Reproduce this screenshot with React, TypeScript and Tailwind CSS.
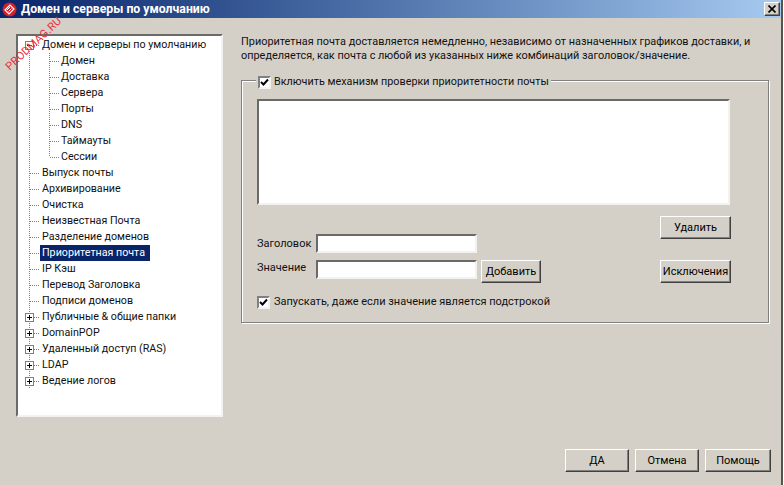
const raised = "bg-[#d4d0c8] border border-t-white border-l-white border-r-[#404040] border-b-[#404040] shadow-[inset_-1px_-1px_0_#808080]";
const sunken = "bg-white border-2 border-t-[#6a6a66] border-l-[#6a6a66] border-r-[#f4f2ee] border-b-[#f4f2ee]";

function Btn({ children, cls }: { children: string; cls: string }) {
  return <div className={`${raised} flex h-[23px] shrink-0 items-center justify-center text-black ${cls}`}>{children}</div>;
}

function Check() {
  return (
    <div className={`flex h-[13px] w-[13px] shrink-0 items-center justify-center ${sunken} border-t-[#808080] border-l-[#808080]`}>
      <svg width="9" height="9" viewBox="0 0 9 9">
        <path d="M1 4 L3.5 6.5 L8 1.5" fill="none" stroke="#000" strokeWidth="2" />
      </svg>
    </div>
  );
}

type Kind = "root" | "child" | "childLast" | "leaf" | "plus";

function Connector({ kind }: { kind: Kind }) {
  const d = { stroke: "#808080", strokeDasharray: "1 1", strokeWidth: 1 };
  const isChild = kind === "child" || kind === "childLast";
  const hasBox = kind === "root" || kind === "plus";
  return (
    <svg width={isChild ? 35 : 16} height="16" viewBox={`0 0 ${isChild ? 35 : 16} 16`} className="shrink-0">
      <line x1="5.5" y1={kind === "root" ? 8 : 0} x2="5.5" y2="16" {...d} />
      {!isChild && <line x1="6" y1="8.5" x2="16" y2="8.5" {...d} />}
      {isChild && <line x1="25.5" y1="0" x2="25.5" y2={kind === "childLast" ? 8 : 16} {...d} />}
      {isChild && <line x1="26" y1="8.5" x2="35" y2="8.5" {...d} />}
      {hasBox && (
        <g>
          <rect x="1.5" y="4.5" width="8" height="8" fill="#fff" stroke="#808080" />
          <line x1="3" y1="8.5" x2="8" y2="8.5" stroke="#000" />
          {kind === "plus" && <line x1="5.5" y1="6" x2="5.5" y2="11" stroke="#000" />}
        </g>
      )}
    </svg>
  );
}

const rows: { t: string; k: Kind; sel?: boolean }[] = [
  { t: "Домен и серверы по умолчанию", k: "root" },
  { t: "Домен", k: "child" },
  { t: "Доставка", k: "child" },
  { t: "Сервера", k: "child" },
  { t: "Порты", k: "child" },
  { t: "DNS", k: "child" },
  { t: "Таймауты", k: "child" },
  { t: "Сессии", k: "childLast" },
  { t: "Выпуск почты", k: "leaf" },
  { t: "Архивирование", k: "leaf" },
  { t: "Очистка", k: "leaf" },
  { t: "Неизвестная Почта", k: "leaf" },
  { t: "Разделение доменов", k: "leaf" },
  { t: "Приоритетная почта", k: "leaf", sel: true },
  { t: "IP Кэш", k: "leaf" },
  { t: "Перевод Заголовка", k: "leaf" },
  { t: "Подписи доменов", k: "leaf" },
  { t: "Публичные & общие папки", k: "plus" },
  { t: "DomainPOP", k: "plus" },
  { t: "Удаленный доступ (RAS)", k: "plus" },
  { t: "LDAP", k: "plus" },
  { t: "Ведение логов", k: "plus" },
];

export default function App() {
  return (
    <div className="relative flex h-[485px] w-[783px] flex-col overflow-hidden border-r-2 border-r-[#555550] bg-[#d4d0c8] text-[11px] leading-4 text-[#111] [font-family:'Roboto','Liberation_Sans',sans-serif]">
      <div className="flex h-[18px] shrink-0 items-center bg-gradient-to-r from-[#0a246a] to-[#a6caf0] pl-[2px] pr-[1px]">
        <svg width="15" height="15" viewBox="0 0 15 15" className="shrink-0">
          <circle cx="7.5" cy="7.5" r="7" fill="#d81e24" />
          <path d="M3 8 L8 3 L12 7 L7 12 Z" fill="none" stroke="#fff" strokeWidth="1.2" />
          <path d="M5 8 L8 5 M6.5 9.5 L9.5 6.5" stroke="#fff" strokeWidth="1" />
        </svg>
        <span className="ml-[4px] text-[12.25px] font-bold text-white">Домен и серверы по умолчанию</span>
        <div className={`${raised} ml-auto flex h-[14px] w-[16px] items-center justify-center`}>
          <svg width="8" height="8" viewBox="0 0 8 8">
            <path d="M0.5 0.5 L7.5 7.5 M7.5 0.5 L0.5 7.5" stroke="#000" strokeWidth="1.6" />
          </svg>
        </div>
      </div>

      <div className="flex flex-1 pl-[16px] pt-[16px]">
        <div className={`${sunken} h-[383px] w-[207px] shrink-0 pl-[6px] pt-[1px] text-[10.7px]`}>
          {rows.map((r) => (
            <div key={r.t} className="flex h-4 items-center whitespace-nowrap">
              <Connector kind={r.k} />
              <span className={`pl-[2px] ${r.sel ? "bg-[#0a246a] pr-[5px] text-white" : ""}`}>{r.t}</span>
            </div>
          ))}
        </div>

        <div className="ml-[18px] flex w-[530px] flex-col">
          <p className="mt-[1px] w-[530px] text-[10.9px] leading-[14px]">
            Приоритетная почта доставляется немедленно, независимо от назначенных графиков доставки, и определяется, как почта с любой из указанных ниже комбинаций заголовок/значение.
          </p>
          <div className="relative mt-[17px] flex h-[243px] w-[528px] flex-col border border-[#808080] pl-[15px] pt-[18px] shadow-[inset_1px_1px_0_#fff,1px_1px_0_#fff]">
            <div className="absolute left-[14px] top-[-7px] flex items-center gap-[2px] bg-[#d4d0c8] px-[2px] text-[10.8px]">
              <Check />
              <span className="pl-[1px]">Включить механизм проверки приоритетности почты</span>
            </div>
            <div className={`${sunken} h-[106px] w-[473px] shrink-0`} />
            <div className="flex flex-1">
              <div className="flex w-[403px] shrink-0 flex-col pt-[29px]">
                <div className="flex items-center">
                  <span className="w-[59px]">Заголовок</span>
                  <div className={`${sunken} h-[19px] w-[161px]`} />
                </div>
                <div className="mt-[7px] flex items-start">
                  <span className="w-[59px]">Значение</span>
                  <div className={`${sunken} h-[19px] w-[161px]`} />
                  <Btn cls="ml-[4px] w-[60px]">Добавить</Btn>
                </div>
                <div className="mt-[11px] flex items-center gap-[4px]">
                  <Check />
                  <span className="whitespace-nowrap">Запускать, даже если значение является подстрокой</span>
                </div>
              </div>
              <div className="flex flex-col pt-[11px]">
                <Btn cls="w-[71px]">Удалить</Btn>
                <Btn cls="mt-[21px] w-[71px]">Исключения</Btn>
              </div>
            </div>
          </div>
          <div className="mt-[126px] flex w-[530px] justify-end gap-[6px]">
            <Btn cls="w-[64px]">ДА</Btn>
            <Btn cls="w-[64px]">Отмена</Btn>
            <Btn cls="w-[66px]">Помощь</Btn>
          </div>
        </div>
      </div>

      <div className="absolute left-[-3px] top-[36px] w-[74px] -rotate-[43deg] text-center text-[11px] tracking-[0.2px] text-[#e8323a]">
        PRODMAG.RU
      </div>
    </div>
  );
}
